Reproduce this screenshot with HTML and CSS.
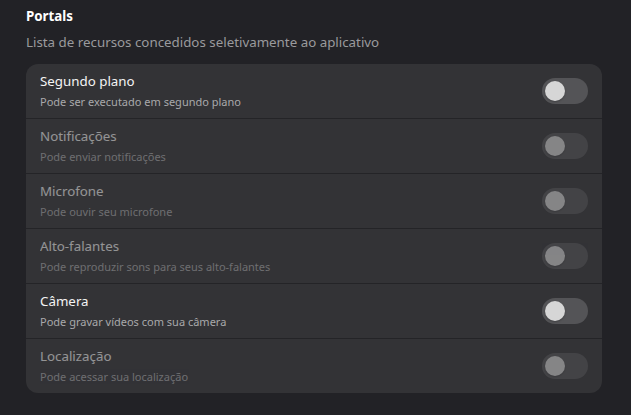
FILE: index.html
```html
<!DOCTYPE html>
<html lang="pt-BR">
<head>
<meta charset="utf-8">
<title>Portals</title>
<link rel="stylesheet" href="styles.css">
</head>
<body>
<main class="page">
  <header class="group-header">
    <h2 class="group-title">Portals</h2>
    <p class="group-desc">Lista de recursos concedidos seletivamente ao aplicativo</p>
  </header>
  <ul class="card">
    <li class="row">
      <div class="row-text">
        <span class="row-title">Segundo plano</span>
        <span class="row-sub">Pode ser executado em segundo plano</span>
      </div>
      <span class="switch"><span class="knob"></span></span>
    </li>
    <li class="row disabled">
      <div class="row-text">
        <span class="row-title">Notificações</span>
        <span class="row-sub">Pode enviar notificações</span>
      </div>
      <span class="switch"><span class="knob"></span></span>
    </li>
    <li class="row disabled">
      <div class="row-text">
        <span class="row-title">Microfone</span>
        <span class="row-sub">Pode ouvir seu microfone</span>
      </div>
      <span class="switch"><span class="knob"></span></span>
    </li>
    <li class="row disabled">
      <div class="row-text">
        <span class="row-title">Alto-falantes</span>
        <span class="row-sub">Pode reproduzir sons para seus alto-falantes</span>
      </div>
      <span class="switch"><span class="knob"></span></span>
    </li>
    <li class="row">
      <div class="row-text">
        <span class="row-title">Câmera</span>
        <span class="row-sub">Pode gravar vídeos com sua câmera</span>
      </div>
      <span class="switch"><span class="knob"></span></span>
    </li>
    <li class="row disabled">
      <div class="row-text">
        <span class="row-title">Localização</span>
        <span class="row-sub">Pode acessar sua localização</span>
      </div>
      <span class="switch"><span class="knob"></span></span>
    </li>
  </ul>
</main>
</body>
</html>
```

FILE: styles.css
```css
* { box-sizing: border-box; }
html, body {
  margin: 0;
  padding: 0;
  background: #222226;
  height: 100%;
}
body {
  font-family: "Noto Sans", "DejaVu Sans", sans-serif;
  color: #ffffff;
  overflow: hidden;
}
.page {
  padding: 7px 29px 0 26px;
}
.group-header {
  display: flex;
  flex-direction: column;
  gap: 6px;
  margin-bottom: 12px;
}
.group-title {
  margin: 0;
  font-size: 13.33px;
  line-height: 19px;
  font-weight: 700;
  color: #ffffff;
}
.group-desc {
  margin: 0;
  font-size: 13.33px;
  line-height: 20px;
  color: #9a9a9d;
}
.card {
  list-style: none;
  margin: 0;
  padding: 0;
  background: #333336;
  border-radius: 12px;
  overflow: hidden;
}
.row {
  display: flex;
  align-items: center;
  justify-content: space-between;
  height: 55px;
  padding: 0 14px;
  border-bottom: 1px solid #242427;
}
.row:last-child { border-bottom: none; height: 54px; }
.row-text {
  display: flex;
  flex-direction: column;
  gap: 4px;
  padding-bottom: 2px;
}
.row-title {
  font-size: 13.33px;
  line-height: 18px;
  color: #f4f4f4;
}
.row-sub {
  font-size: 11px;
  line-height: 15px;
  color: #a9a9ab;
}
.switch {
  width: 46px;
  height: 26px;
  border-radius: 13px;
  background: #545457;
  padding: 3px;
  display: flex;
  align-items: center;
  flex-shrink: 0;
}
.knob {
  width: 20px;
  height: 20px;
  border-radius: 50%;
  background: #d6d6d6;
  box-shadow: 0 1px 2px rgba(0,0,0,0.25);
}
.row.disabled .row-title,
.row.disabled .row-sub,
.row.disabled .switch { opacity: 0.5; }
```
